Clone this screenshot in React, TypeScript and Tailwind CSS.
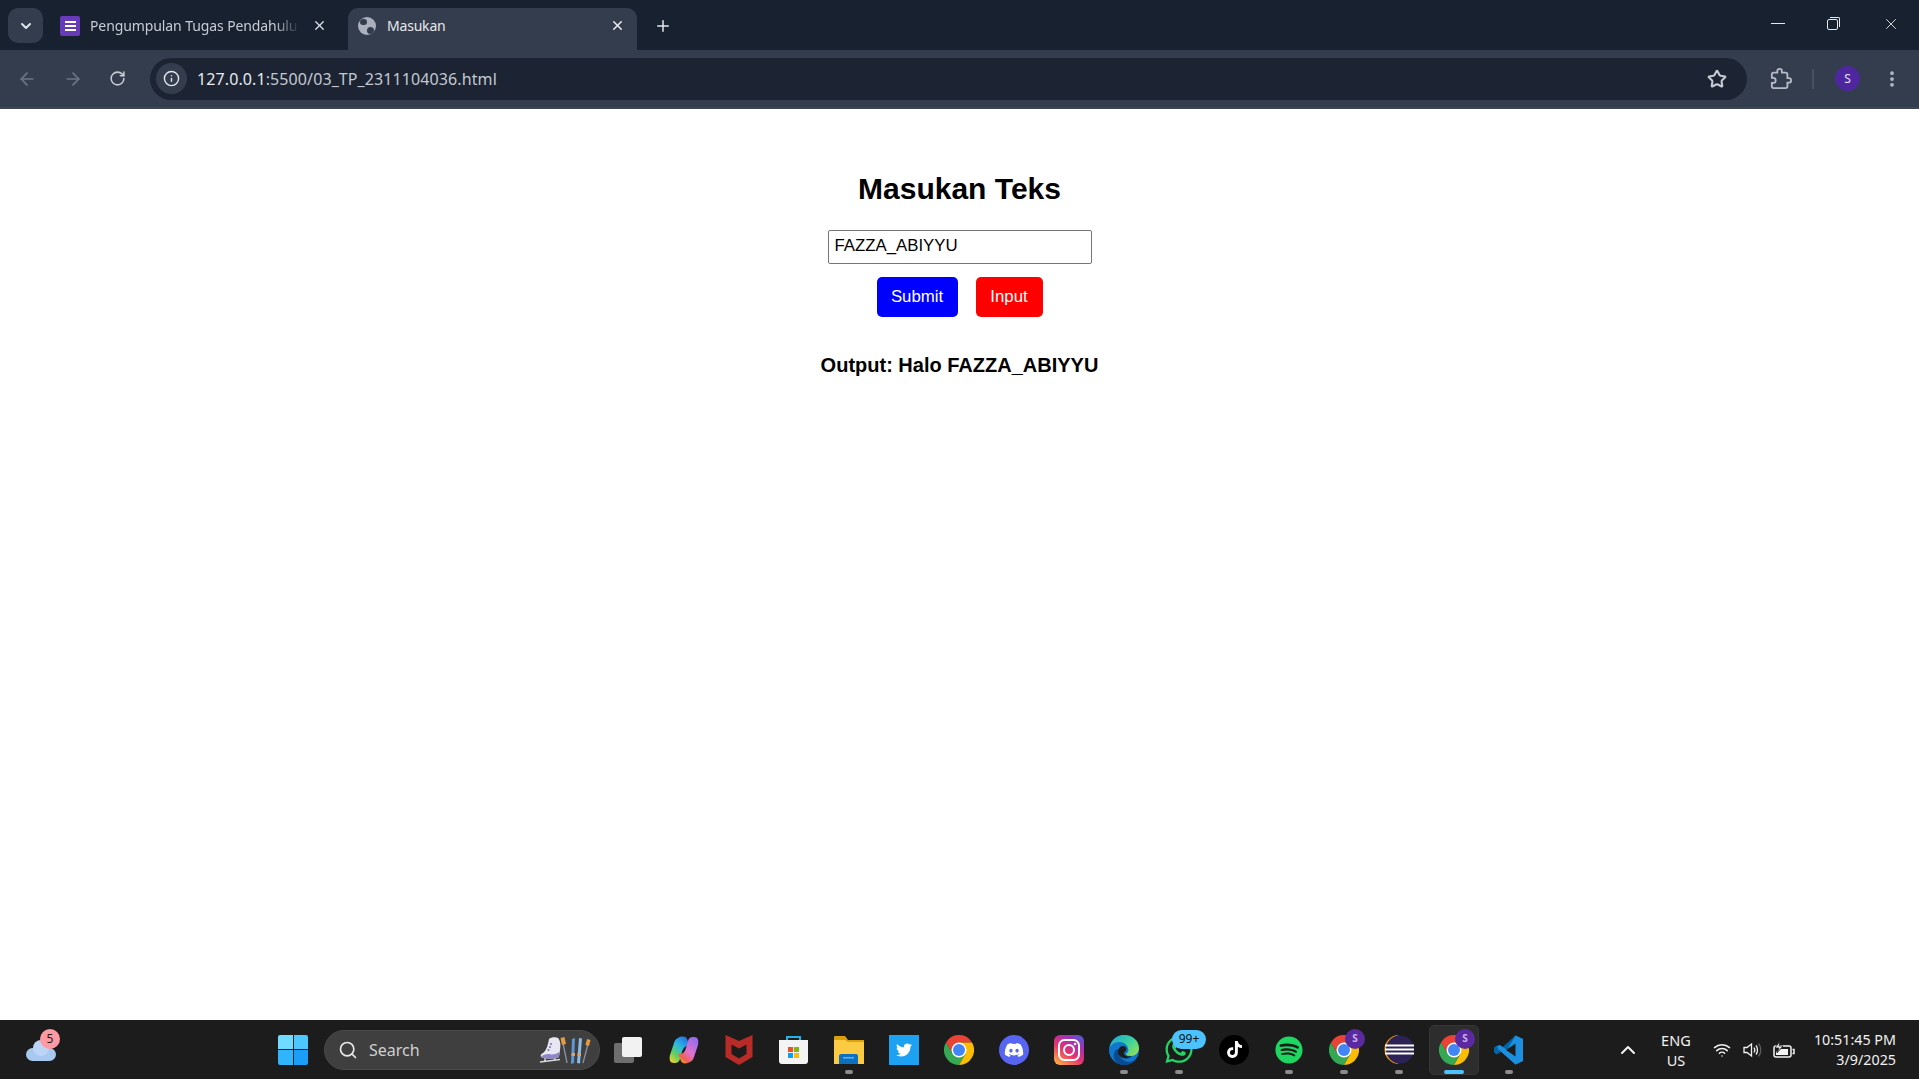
import { FaDiscord, FaSpotify, FaTiktok, FaTwitter, FaWhatsapp } from 'react-icons/fa';
import { ArrowLeft, ArrowRight, ChevronDown, ChevronUp, Info, MoreVertical, Plus, RotateCw, Search, Star, Wifi, X } from 'lucide-react';

const uiFont = 'font-["Noto_Sans",sans-serif]';

const ChromeIcon = () => (
   <svg viewBox="0 0 30 30" className="w-[30px] h-[30px]">
      <path d="M28 7.5A15 15 0 0 0 2 7.5L8.5 18.75 15 7.5Z" fill="#ea4335" />
      <path d="M2 7.5A15 15 0 0 0 15 30L21.5 18.75H8.5Z" fill="#34a853" />
      <path d="M15 30A15 15 0 0 0 28 7.5H15L21.5 18.75Z" fill="#fbbc04" />
      <circle cx="15" cy="15" r="7.5" fill="#fff" />
      <circle cx="15" cy="15" r="6" fill="#4285f4" />
   </svg>
);

const ProfileBadge = () => (
   <span className="absolute -top-[6px] -right-[6px] w-5 h-5 rounded-full bg-[#5b2aa0] text-[#c9b1ee] text-[10px] font-bold flex items-center justify-center">
      S
   </span>
);

const Copilot = () => (
   <svg viewBox="0 0 30 30" className="w-[30px] h-[30px]">
      <defs>
         <linearGradient id="cp1" x1="0.8" y1="0" x2="0.1" y2="1">
            <stop offset="0" stopColor="#1f6fe8" />
            <stop offset="0.4" stopColor="#2fb8e0" />
            <stop offset="0.7" stopColor="#5fd060" />
            <stop offset="1" stopColor="#f6d32d" />
         </linearGradient>
         <linearGradient id="cp2" x1="0.9" y1="0" x2="0.2" y2="1">
            <stop offset="0" stopColor="#8a6cf0" />
            <stop offset="0.55" stopColor="#e070d0" />
            <stop offset="0.85" stopColor="#f0604a" />
            <stop offset="1" stopColor="#f7a83c" />
         </linearGradient>
      </defs>
      <path d="M9 3C12 1 17 1 18 4L21 11C17 10 14 13 13 17L11 24C10 28 7 28 5 28 1 28 0 25 1 20L5 8C6 5 7 4 9 3Z" fill="url(#cp1)" />
      <path d="M21 27C18 29 13 29 12 26L9 19C13 20 16 17 17 13L19 6C20 2 23 2 25 2 29 2 30 5 29 10L25 22C24 25 23 26 21 27Z" fill="url(#cp2)" />
   </svg>
);

const McAfee = () => (
   <svg viewBox="0 0 30 30" className="w-[30px] h-[30px]">
      <path d="M1.500 0 15 6 28.500 0V22L15 30 1.500 22Z" fill="#b92b27" />
      <path d="M7.500 9.500 15 13.500 22.500 9.500V19L15 23.500 7.500 19Z" fill="#1c1c1c" />
   </svg>
);

const Store = () => (
   <svg viewBox="0 0 30 30" className="w-[30px] h-[30px]">
      <path d="M8 6V2h13v4" fill="none" stroke="#20b4e8" strokeWidth="2" />
      <path d="M0 5h29v21a3 3 0 0 1-3 3H3a3 3 0 0 1-3-3Z" fill="#f4f4f4" />
      <rect x="9" y="12" width="5" height="5" fill="#f25022" />
      <rect x="15" y="12" width="5" height="5" fill="#7fba00" />
      <rect x="9" y="18" width="5" height="5" fill="#00a4ef" />
      <rect x="15" y="18" width="5" height="5" fill="#ffb900" />
   </svg>
);

const Explorer = () => (
   <svg viewBox="0 0 30 30" className="w-[30px] h-[30px]">
      <path d="M0 2a1 1 0 0 1 1-1h10l3 4h16v8H0Z" fill="#dba10d" />
      <path d="M0 5h11l3 2h16v22H0Z" fill="#fdcb43" />
      <path d="M5 21a2 2 0 0 1 2-2h15a2 2 0 0 1 2 2v8H5Z" fill="#0c6fc0" />
      <rect x="9" y="22" width="11" height="1.500" fill="#5db4ec" />
   </svg>
);

const Instagram = () => (
   <svg viewBox="0 0 30 30" className="w-[30px] h-[30px]">
      <defs>
         <linearGradient id="ig" x1="0.1" y1="1" x2="0.8" y2="0">
            <stop offset="0" stopColor="#fdb241" />
            <stop offset="0.45" stopColor="#e5336e" />
            <stop offset="0.8" stopColor="#a132b8" />
            <stop offset="1" stopColor="#5a57d0" />
         </linearGradient>
      </defs>
      <rect width="30" height="30" rx="6" fill="url(#ig)" />
      <rect x="5" y="5" width="20" height="20" rx="5.500" fill="none" stroke="#fff" strokeWidth="2" />
      <circle cx="15" cy="15" r="5" fill="none" stroke="#fff" strokeWidth="2" />
      <circle cx="21" cy="9" r="1.300" fill="#fff" />
   </svg>
);

const Edge = () => (
   <svg viewBox="0 0 30 30" className="w-[30px] h-[30px]">
      <defs>
         <linearGradient id="edge1" x1="0" y1="0" x2="1" y2="0.8">
            <stop offset="0" stopColor="#1fa2d8" />
            <stop offset="0.55" stopColor="#38cfa0" />
            <stop offset="1" stopColor="#8fe05a" />
         </linearGradient>
      </defs>
      <circle cx="15" cy="15" r="15" fill="#0f78cc" />
      <path d="M0.500 13C2 5 8 0 15 0c9 0 15 6 15 13 0 5-4 8-8 8-3 0-5-1-5-2 2-1 3-3 2-6-1-4-5-6-9-6C7 7 2 9 0.500 13Z" fill="url(#edge1)" />
      <path d="M10 14c-2 5 2 12 9 13 3 0 6-1 8-3-2 4-7 6-12 6-3 0-6-1-8-3-3-4-3-10 0-12 1-1 2-1 3-1Z" fill="#0a4a8f" />
      <path d="M9.500 14.500C11 10 17 10 17.500 14c0 2-2 2.500-2.500 4 0 3 4 4 8 3-3 3-8 3-11 1-3-2-3.500-5-2.500-7.500Z" fill="#1c1c1c" />
   </svg>
);

const Eclipse = () => (
   <svg viewBox="0 0 30 30" className="w-[30px] h-[30px]">
      <path d="M15 0A15 15 0 0 0 15 29 14.500 14.500 0 0 1 15 0Z" fill="#f09a1a" />
      <circle cx="16" cy="14.500" r="14" fill="#2c2255" />
      <rect x="1" y="9.500" width="29" height="2" fill="#fff" />
      <rect x="1" y="13.500" width="29" height="2" fill="#fff" />
      <rect x="1" y="17.500" width="29" height="2" fill="#fff" />
   </svg>
);

const VsCode = () => (
   <svg viewBox="0 0 30 30" className="w-[30px] h-[30px]">
      <path d="M21.500 0.500 29 4v22l-7.500 3.500L7 16.500l-4 3-3-2v-5l3-2 4 3Z" fill="#0065a9" />
      <path d="M21.500 0.500 29 4v22l-7.500 3.500L4 14l-1-3 3-1 7 5Z" fill="#1c8fe0" />
      <path d="M21.500 8.500 12 15l9.500 6.500Z" fill="#1c1c1c" />
   </svg>
);

const Skates = () => (
   <svg viewBox="0 0 52 34" className="w-[52px] h-[34px]">
      <path d="M10 6c2-2 7-2 9-1 2 2 3 6 2 12l-1 7c-5 2-13 2-18 0-1-2 0-3 2-4 4-3 5-9 6-14Z" fill="#e9e6f4" />
      <path d="M2 24c5 2 13 2 18 0v-5c-2 2-7 3-10 2-3 0-7 1-8 3Z" fill="#8d86c8" />
      <circle cx="12" cy="11" r="0.900" fill="#6a62a8" />
      <circle cx="11" cy="14" r="0.900" fill="#6a62a8" />
      <circle cx="9.500" cy="17" r="0.900" fill="#6a62a8" />
      <path d="M1 29l20-2.500M6 25v3M16 25v2" stroke="#d3d7de" strokeWidth="1.300" fill="none" />
      <path d="M24 10l4 20" stroke="#8a93a3" strokeWidth="1.300" />
      <path d="M21.500 5l4-1 1.500 7-4 1Z" fill="#e59a45" />
      <path d="M33 6l3-1-1 25-3 1Z" fill="#5f97d0" />
      <path d="M40 5l3 0.500-2 25-3-0.500Z" fill="#8cbce6" />
      <rect x="32.500" y="20" width="3.500" height="3" fill="#e6a060" />
      <rect x="38.500" y="20" width="3.500" height="3" fill="#e6a060" />
      <path d="M49 11l-5 19" stroke="#8a93a3" strokeWidth="1.300" />
      <path d="M48 6l3.500 1-1.500 6-3.500-1Z" fill="#e59a45" />
   </svg>
);

const Slot = ({ children, dot, active }: { children: React.ReactNode; dot?: boolean; active?: boolean }) => (
   <div className="relative w-[55px] h-[59px] flex items-center justify-center">
      {active && <div className="absolute left-[2px] top-[5px] w-[50px] h-[50px] rounded-[5px] bg-[#2d2d2d] border border-[#363636]" />}
      <div className="relative w-[30px] h-[30px] flex items-center justify-center">{children}</div>
      {dot && !active && <div className="absolute bottom-[5px] left-[23px] w-2 h-1 rounded-full bg-[#8c8c8c]" />}
      {active && <div className="absolute bottom-[5px] left-[17px] w-5 h-1 rounded-full bg-[#4cc2ff]" />}
   </div>
);

const TabStrip = () => (
   <div className={`flex h-[51px] bg-[#182130] text-[14px] ${uiFont}`}>
      <div className="ml-2 mt-2 w-[35px] h-[35px] rounded-[10px] bg-[#343d4e] flex items-center justify-center">
         <ChevronDown size={16} strokeWidth={3} className="text-[#dfe3ea]" />
      </div>
      <div className="ml-[17px] w-[280px] h-[35px] mt-2 flex items-center">
         <div className="w-5 h-5 rounded-[2px] bg-[#673ab7] flex flex-col items-center justify-center gap-[2px]">
            <div className="w-[11px] h-[2px] bg-white" />
            <div className="w-[11px] h-[2px] bg-white" />
            <div className="w-[11px] h-[2px] bg-white" />
         </div>
         <span className="ml-[10px] w-[210px] overflow-hidden whitespace-nowrap tracking-[-0.1px] text-[#c7cbd3] [mask-image:linear-gradient(to_right,black_88%,transparent)]">Pengumpulan Tugas Pendahulu</span>
         <X size={15} strokeWidth={2} className="ml-[12px] text-[#dfe3ea]" />
      </div>
      <div className="ml-[8px] mt-2 w-[289px] h-[43px] rounded-t-[10px] bg-[#343d4e] pb-2 flex items-center">
         <div className="ml-[10px] w-[18px] h-[18px] rounded-full bg-[#aab1bd] relative overflow-hidden">
            <div className="absolute left-[2px] top-[2px] w-[7px] h-[6px] rounded-full bg-[#343d4e]" />
            <div className="absolute right-[2px] bottom-[1px] w-[7px] h-[7px] rounded-full bg-[#343d4e]" />
         </div>
         <span className="ml-[11px] flex-1 text-[#e6e8ec] tracking-[-0.2px]">Masukan</span>
         <X size={15} strokeWidth={2.500} className="mr-[12px] text-[#e6e8ec]" />
      </div>
      <Plus size={18} strokeWidth={2} className="ml-[17px] mt-[17px] text-[#e6e8ec]" />
      <div className="flex-1" />
      <div className="flex h-[48px] items-center text-[#e6e8ec]">
         <div className="w-[14px] h-[1px] bg-[#e6e8ec] mr-[42px] mb-[2px]" />
         <div className="relative w-[11px] h-[11px] border border-[#e6e8ec] rounded-[2px] mr-[44px]">
            <div className="absolute -top-[3px] -right-[3px] w-[10px] h-[10px] border-t border-r border-[#e6e8ec] rounded-tr-[2px]" />
         </div>
         <X size={18} strokeWidth={1.200} className="mr-[19px]" />
      </div>
   </div>
);

const Toolbar = () => (
   <div className={`flex items-center h-[59px] bg-[#343d4e] border-b-2 border-b-[#3f4553] -mt-[1px] ${uiFont}`}>
      <ArrowLeft size={20} strokeWidth={2} className="ml-[17px] text-[#6d7585]" />
      <ArrowRight size={20} strokeWidth={2} className="ml-[26px] text-[#6d7585]" />
      <RotateCw size={17} strokeWidth={2.200} className="ml-[26px] text-[#c5cad3]" />
      <div className="ml-[24px] w-[1597px] h-[42px] rounded-full bg-[#1c2433] flex items-center">
         <div className="ml-[6px] w-[31px] h-[31px] rounded-full bg-[#343d4e] flex items-center justify-center">
            <Info size={17} strokeWidth={2} className="text-[#e2e5ea]" />
         </div>
         <span className="ml-[10px] text-[16px] tracking-[0.1px] text-[#c3c8d1]">
            <span className="text-[#e8eaee]">127.0.0.1</span>:5500/03_TP_2311104036.html
         </span>
         <div className="flex-1" />
         <Star size={20} strokeWidth={2.500} className="mr-[20px] text-[#c5cad3]" />
      </div>
      <svg viewBox="0 0 24 24" className="ml-[23px] w-[22px] h-[22px] fill-none stroke-[#b5bbc7] stroke-2">
         <path d="M20.500 11H19V7c0-1.100-.9-2-2-2h-4V3.500C13 2.120 11.880 1 10.500 1S8 2.120 8 3.500V5H4c-1.100 0-1.990.9-1.990 2v3.800H3.500c1.490 0 2.700 1.210 2.700 2.700s-1.210 2.700-2.700 2.700H2V20c0 1.100.9 2 2 2h13c1.100 0 2-.9 2-2v-4h1.500c1.380 0 2.500-1.120 2.500-2.500S21.880 11 20.500 11Z" />
      </svg>
      <div className="ml-[20px] w-[2px] h-5 bg-[#475062]" />
      <div className="ml-[21px] w-[25px] h-[25px] rounded-full bg-[#4e27a0] text-[#e8e0f7] text-[12px] flex items-center justify-center">S</div>
      <MoreVertical size={20} strokeWidth={2.500} className="ml-[22px] text-[#b5bbc7]" />
   </div>
);

const Page = () => (
   <main className='flex-1 bg-white flex flex-col items-center pt-[61px] font-["Liberation_Sans",sans-serif] text-black'>
      <h1 className="text-[30px] leading-[37px] font-bold">Masukan Teks</h1>
      <input
         readOnly
         value="FAZZA_ABIYYU"
         className="mt-[23px] w-[264px] h-[34px] border border-[#767676] rounded-[2px] px-[6px] pb-[3px] text-[16.800px] outline-none"
      />
      <div className="mt-[13px] flex gap-[18px]">
         <button className="w-[81px] h-[40px] rounded-[5px] bg-[#0000ff] text-white text-[16.800px]">Submit</button>
         <button className="w-[67px] h-[40px] rounded-[5px] bg-[#ff0000] text-white text-[16.800px]">Input</button>
      </div>
      <p className="mt-[36px] text-[20px] leading-[24px] font-bold">Output: Halo FAZZA_ABIYYU</p>
   </main>
);

const Taskbar = () => (
   <footer className={`flex items-center h-[59px] bg-[#1c1c1c] text-white ${uiFont}`}>
      <div className="relative ml-[26px] w-[30px] h-[59px]">
         <div className="absolute left-0 top-[28px] w-[30px] h-[13px] rounded-[7px] bg-[#a9c8f0]" />
         <div className="absolute left-[7px] top-[20px] w-[16px] h-[16px] rounded-full bg-[#bcd4f5]" />
         <div className="absolute left-[14px] top-[9px] w-5 h-5 rounded-full bg-[#ff99a4] text-[#1c1c1c] text-[12px] flex items-center justify-center">5</div>
      </div>
      <div className="ml-[222px] w-[30px] h-[30px] grid grid-cols-2 gap-[1px]">
         <div className="rounded-tl-[2px] bg-[#6fdcff]" />
         <div className="rounded-tr-[2px] bg-[#4cc6fc]" />
         <div className="rounded-bl-[2px] bg-[#30b4fb]" />
         <div className="rounded-br-[2px] bg-[#1a9efa]" />
      </div>
      <div className="ml-[16px] w-[276px] h-[40px] rounded-full bg-[#3f3f3f] border border-[#4a4a4a] flex items-center relative">
         <Search size={20} strokeWidth={2} className="ml-[13px] text-[#e8e8e8]" />
         <span className="ml-[11px] text-[16px] text-[#cfcfcf]">Search</span>
         <div className="absolute right-[8px] top-[2px]">
            <Skates />
         </div>
      </div>
      <div className="ml-[1.500px] flex">
         <Slot>
            <div className="relative w-[30px] h-[30px]">
               <div className="absolute left-0 top-[8px] w-[20px] h-[20px] rounded-[2px] bg-[#6e6e6e]" />
               <div className="absolute left-[8px] top-[2px] w-[20px] h-[20px] rounded-[2px] bg-[#f2f2f2]" />
            </div>
         </Slot>
         <Slot><Copilot /></Slot>
         <Slot><McAfee /></Slot>
         <Slot><Store /></Slot>
         <Slot dot><Explorer /></Slot>
         <Slot>
            <div className="w-[30px] h-[30px] bg-[#1da1f2] flex items-center justify-center"><FaTwitter size={16} className="text-white" /></div>
         </Slot>
         <Slot><ChromeIcon /></Slot>
         <Slot>
            <div className="w-[30px] h-[30px] rounded-full bg-[#5865f2] flex items-center justify-center"><FaDiscord size={20} className="text-white" /></div>
         </Slot>
         <Slot><Instagram /></Slot>
         <Slot dot><Edge /></Slot>
         <Slot dot>
            <FaWhatsapp size={31} className="text-[#25d366]" />
            <span className="absolute -top-[5px] left-[8px] w-[34px] h-[19px] rounded-full bg-[#4cc2ff] text-[#111] text-[12px] flex items-center justify-center">99+</span>
         </Slot>
         <Slot>
            <div className="w-[30px] h-[30px] rounded-full bg-black flex items-center justify-center"><FaTiktok size={17} className="text-white" /></div>
         </Slot>
         <Slot dot><FaSpotify size={28} className="text-[#1ed760]" /></Slot>
         <Slot dot><ChromeIcon /><ProfileBadge /></Slot>
         <Slot dot><Eclipse /></Slot>
         <Slot active><ChromeIcon /><ProfileBadge /></Slot>
         <Slot dot><VsCode /></Slot>
      </div>
      <div className="flex-1" />
      <ChevronUp size={24} strokeWidth={2} className="mr-[19px] text-[#f2f2f2]" />
      <div className="w-[34px] mr-[20px] text-[14.500px] leading-[20px] text-center text-[#f2f2f2]">
         <div>ENG</div>
         <div>US</div>
      </div>
      <Wifi size={18} strokeWidth={2} className="mr-[11px] text-[#f2f2f2]" />
      <svg viewBox="0 0 20 18" className="w-[20px] h-[18px] mr-[10px] fill-none stroke-[#f2f2f2] stroke-[1.300]">
         <path d="M2 6.500h3L9.500 3v12L5 11.500H2Z" />
         <path d="M12 6.500c1 1.500 1 3.500 0 5" />
         <path d="M14 4.500c2 2.500 2 6.500 0 9" />
         <path d="M16.500 2.500c3 3.500 3 9.500 0 13" className="stroke-[#5c5c5c]" />
      </svg>
      <svg viewBox="0 0 24 18" className="w-[24px] h-[18px] mr-[18px] fill-none stroke-[#f2f2f2] stroke-[1.500]">
         <rect x="2" y="5" width="17" height="11" rx="2" />
         <path d="M20.500 8.500h1.500v4h-1.500" />
         <path d="M4 14V11l5-3h7v6Z" fill="#f2f2f2" stroke="none" />
         <path d="M8 0 3 7h4l-2 5 6-7H7Z" fill="#f2f2f2" stroke="#1c1c1c" strokeWidth="0.800" />
      </svg>
      <div className="mr-[23px] text-[14.300px] leading-[20px] text-right text-[#f2f2f2]">
         <div>10:51:45 PM</div>
         <div>3/9/2025</div>
      </div>
   </footer>
);

export default function App() {
   return (
      <div className="w-full h-[1079px] flex flex-col overflow-hidden">
         <TabStrip />
         <Toolbar />
         <Page />
         <Taskbar />
      </div>
   );
}
